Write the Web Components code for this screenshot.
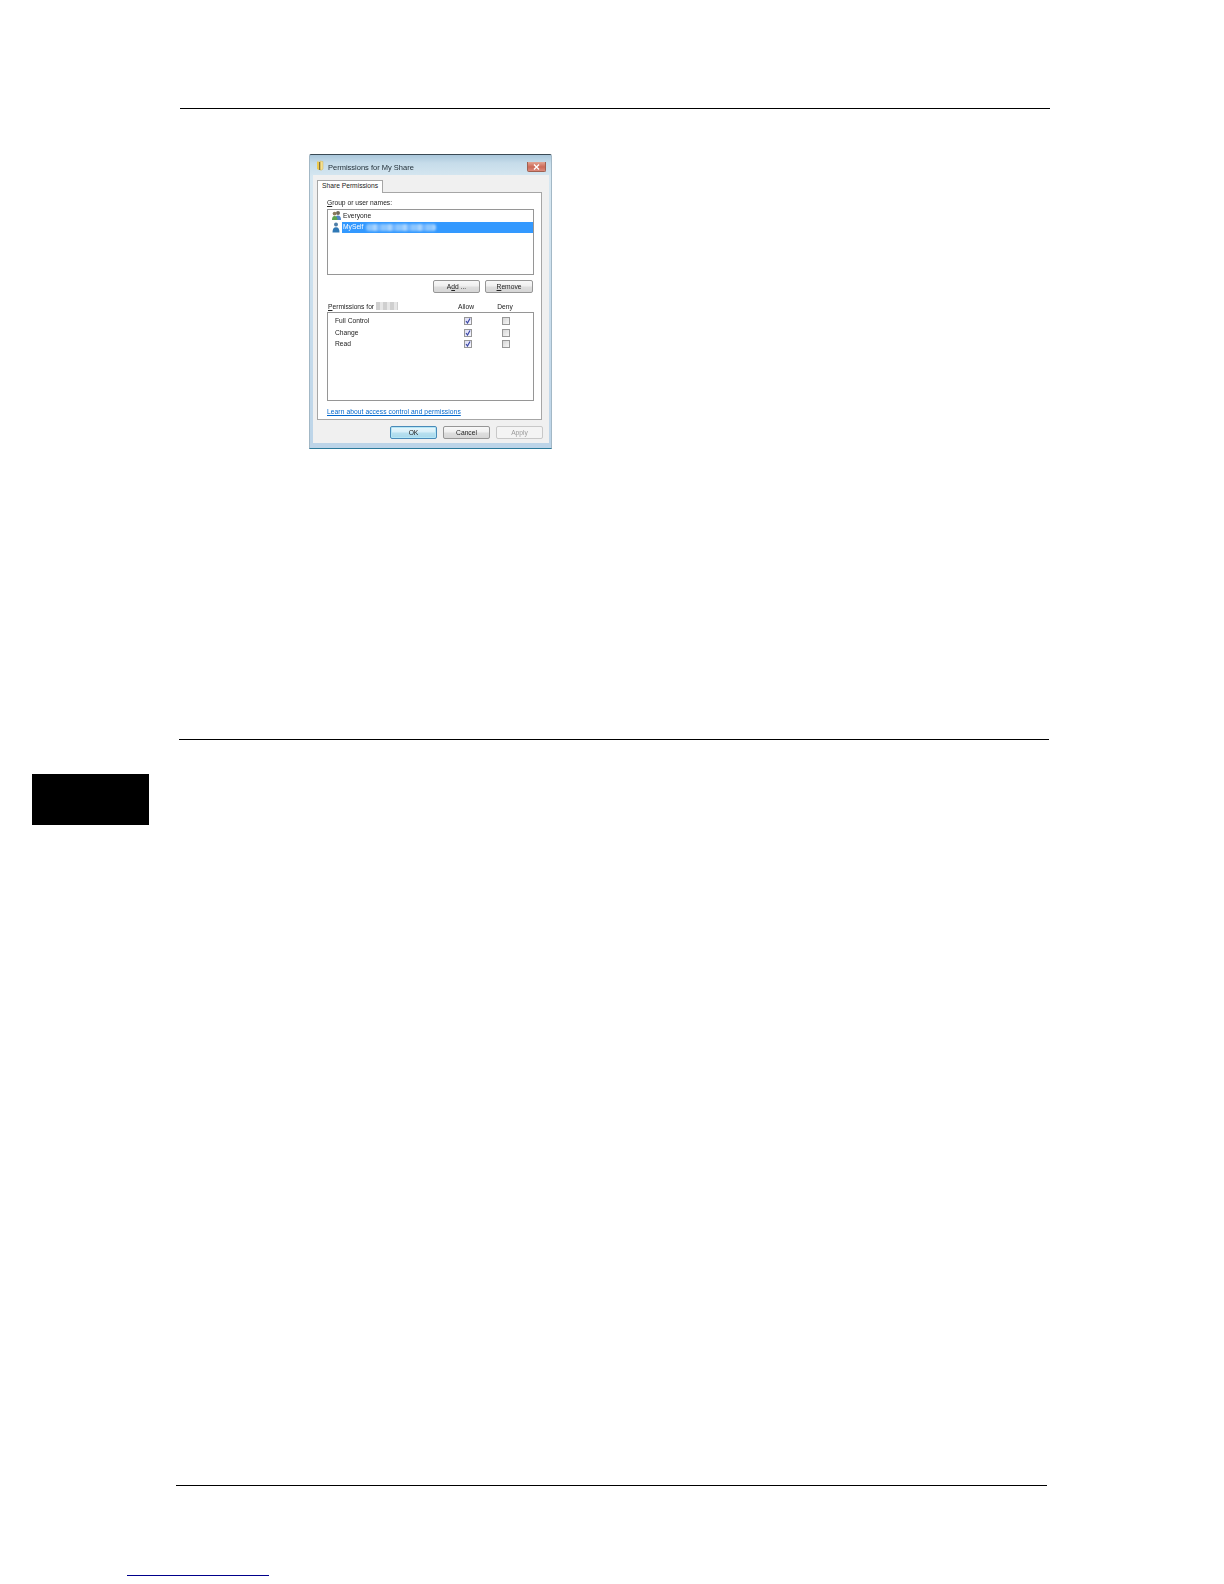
<!DOCTYPE html>
<html>
<head>
<meta charset="utf-8">
<title>Permissions for My Share</title>
<style>
    html, body { margin: 0; background: #fff; }
</style>
</head>
<body>
<doc-page>
    <win-dialog heading="Permissions for My Share"></win-dialog>
</doc-page>

<script>
const pageTemplate = document.createElement('template');
pageTemplate.innerHTML = `
    <style>
        :host { display: block; width: 1224px; height: 1584px; overflow: hidden; background: #fff; }
        .rule { height: 1px; background: #000; }
        .top { margin: 108px 0 0 180px; width: 870px; }
        .dialog { margin: 45px 0 0 309px; width: 243px; }
        .middle { margin: 290px 0 0 179px; width: 870px; }
        .chapter { margin: 34px 0 0 32px; width: 117px; height: 51px; background: #000; }
        .bottom { margin: 660px 0 0 176px; width: 871px; }
        .link { margin: 89px 0 0 127px; width: 142px; height: 1px; background: #00008b; }
    </style>
    <div class="rule top"></div>
    <div class="dialog"><slot></slot></div>
    <div class="rule middle"></div>
    <div class="chapter"></div>
    <div class="rule bottom"></div>
    <div class="link"></div>
`;

class DocPage extends HTMLElement {
    constructor() {
        super();
        this.attachShadow({mode: "open"});
        this.shadowRoot.appendChild(pageTemplate.content.cloneNode(true));
    }
}

const buttonTemplate = document.createElement('template');
buttonTemplate.innerHTML = `
    <style>
        :host {
            display: flex; align-items: center; justify-content: center;
            height: 13px; box-sizing: border-box;
            border: 1px solid #969696; border-radius: 2px;
            background: linear-gradient(#f8f8f8 0, #efefef 48%, #dedede 52%, #d6d6d6 100%);
            color: #222;
        }
        :host([primary]) {
            border-color: #4a8ab8;
            background: linear-gradient(#eaf7fc 0, #d6eef8 48%, #b8e0f0 52%, #a9d8eb 100%);
            box-shadow: inset 0 0 0 1px #b4e6f6;
        }
        :host([disabled]) {
            border-color: #c8c8c8; background: #f4f4f4; color: #9a9a9a;
        }
    </style>
    <slot></slot>
`;

class WinButton extends HTMLElement {
    constructor() {
        super();
        this.attachShadow({mode: "open"});
        this.shadowRoot.appendChild(buttonTemplate.content.cloneNode(true));
    }
}

const checkTemplate = document.createElement('template');
checkTemplate.innerHTML = `
    <style>
        :host {
            display: block; width: 8px; height: 8px; box-sizing: border-box;
            border: 1px solid #979797;
            background: linear-gradient(135deg, #d6d6d6, #f6f6f6);
        }
        :host([checked]) { background: linear-gradient(135deg, #dcdcf2, #f6f6ff); }
        svg { display: none; width: 6px; height: 6px; }
        :host([checked]) svg { display: block; }
    </style>
    <svg viewBox="0 0 6 6"><path d="M1 3 L2.5 5 L5 .5" fill="none" stroke="#3a46a4" stroke-width="1.2"/></svg>
`;

class WinCheck extends HTMLElement {
    constructor() {
        super();
        this.attachShadow({mode: "open"});
        this.shadowRoot.appendChild(checkTemplate.content.cloneNode(true));
    }
}

const permTemplate = document.createElement('template');
permTemplate.innerHTML = `
    <style>
        :host {
            display: grid; grid-template-columns: 128.5px 8px 30.5px 8px;
            align-items: center; height: 11.5px; color: #222;
        }
    </style>
    <span id="name"></span>
    <win-check checked></win-check>
    <span></span>
    <win-check></win-check>
`;

class PermRow extends HTMLElement {
    constructor() {
        super();
        this.attachShadow({mode: "open"});
        this.shadowRoot.appendChild(permTemplate.content.cloneNode(true));
        this.shadowRoot.querySelector('#name').innerText = this.getAttribute('name');
    }
}

const dialogTemplate = document.createElement('template');
dialogTemplate.innerHTML = `
    <style>
        :host {
            display: block; height: 295px; box-sizing: border-box;
            font: 6.7px/10px "Liberation Sans", sans-serif; color: #222;
            background: linear-gradient(#a9c6da 0, #c6dcea 8px, #d6e7f1 22px, #bcd4e8 100%);
            border: 1px solid #a3b8c6; border-top-color: #3a4a55; border-bottom-color: #2c7a9a; border-radius: 2px 2px 0 0;
            padding: 0 2px 5px 3px;
            filter: blur(.35px);
        }
        .title {
            display: flex; align-items: center; height: 20px; padding: 0 3px 0 3px;
        }
        .title svg { width: 8px; height: 11px; margin-right: 4px; }
        .title b { flex: 1; font-weight: normal; font-size: 7.5px; color: #1d2a33; padding-top: 5px; }
        .close {
            display: flex; align-items: center; justify-content: center;
            width: 19px; height: 10px; margin-top: 4px; box-sizing: border-box;
            border: 1px solid #a06050; border-top: 0; border-radius: 0 0 2px 2px;
            background: linear-gradient(#e3a594, #cc6a58 55%, #dc8a7c);
        }
        .close svg { width: 7px; height: 6px; margin: 0; }
        .client { height: 268px; background: #f0f0f0; padding: 5px 7px 0 4px; box-sizing: border-box; }
        .tab {
            display: inline-block; position: relative; z-index: 1; box-sizing: border-box;
            width: 66px; height: 13px; padding: 0 0 0 4px;
            background: #fff; border: 1px solid #a6a6a6; border-bottom: 0;
        }
        .panel {
            box-sizing: border-box; height: 228px; margin-top: -1px;
            padding: 5px 7px 0 9px; background: #fff; border: 1px solid #a6a6a6;
        }
        .box { border: 1px solid #969696; box-sizing: border-box; background: #fff; }
        .label { height: 11px; }
        .users { height: 66px; }
        .user { display: flex; align-items: center; height: 11.5px; padding-left: 3px; }
        .user svg { width: 11px; height: 11px; flex: none; }
        .user span { flex: 1; display: flex; align-items: center; height: 100%; padding-left: 1px; }
        .user.on span { background: #3399ff; color: #fff; }
        .smear {
            width: 70px; height: 7px; margin-left: 3px; border-radius: 3px;
            background: repeating-linear-gradient(90deg, #8cc6ff 0 7px, #a8d4ff 7px 11px, #72b6ff 11px 15px);
            filter: blur(1px);
        }
        .smear.grey { display: inline-block; width: 22px; height: 8px; margin: 0 0 -1px 2px; border-radius: 0;
            background: repeating-linear-gradient(90deg, #cfcfcf 0 4px, #e6e6e6 4px 7px); filter: blur(.6px); }
        .actions { display: flex; justify-content: flex-end; gap: 5px; margin-top: 5px; padding-right: 1px; }
        .actions win-button { width: 47px; }
        .actions win-button:last-child { width: 48px; }
        .head {
            display: grid; grid-template-columns: 128px 20px 19px 20px;
            align-items: center; height: 10px; margin-top: 9px; padding-left: 1px;
        }
        .head span { text-align: center; white-space: nowrap; }
        .head span:first-child { text-align: left; }
        .perms { height: 89px; padding: 2.5px 0 0 7px; }
        .learn { display: block; margin-top: 6px; color: #0066cc; text-decoration: underline; letter-spacing: .07px; white-space: nowrap; }
        .footer { display: flex; justify-content: flex-end; gap: 6px; margin-top: 6px; margin-right: -1px; }
        .footer win-button { width: 47px; }
        u { text-decoration: underline; }
    </style>
    <div class="title">
        <svg viewBox="0 0 8 11">
            <path d="M1 1.5 Q3 1 3.5 2.5 L3.5 10 Q1.5 10 1 8.5 Z" fill="#efc94c"/>
            <path d="M4 1 L7 1.5 L7 9 Q6 10.5 4 10 Z" fill="#f6e08e" stroke="#c9a94a" stroke-width=".4"/>
            <path d="M3.7 2 V10" stroke="#4a3f1c" stroke-width=".8"/>
        </svg>
        <b id="heading"></b>
        <div class="close">
            <svg viewBox="0 0 7 6"><path d="M1 .5 L6 5.5 M6 .5 L1 5.5" stroke="#fff" stroke-width="1.4"/></svg>
        </div>
    </div>
    <div class="client">
        <div class="tab">Share Permissions</div>
        <div class="panel">
            <div class="label"><u>G</u>roup or user names:</div>
            <div class="box users">
                <div class="user">
                    <svg viewBox="0 0 11 11">
                        <circle cx="7" cy="3" r="2" fill="#6f6a5a"/>
                        <path d="M4 10 Q4 5.5 7 5.5 Q10 5.5 10 10 Z" fill="#4f86c6"/>
                        <circle cx="3.6" cy="3.6" r="1.9" fill="#8a7a5c"/>
                        <path d="M1 10 Q1 6 3.6 6 Q6.4 6 6.4 10 Z" fill="#5ba34f"/>
                    </svg>
                    <span>Everyone</span>
                </div>
                <div class="user on">
                    <svg viewBox="0 0 11 11">
                        <circle cx="5" cy="2.6" r="2" fill="#4f7fa8"/>
                        <path d="M1.5 10.5 Q1.5 5.2 5 5.2 Q8.5 5.2 8.5 10.5 Z" fill="#2f78b5"/>
                    </svg>
                    <span>MySelf<i class="smear"></i></span>
                </div>
            </div>
            <div class="actions">
                <win-button><span>A<u>d</u>d ...</span></win-button>
                <win-button><span><u>R</u>emove</span></win-button>
            </div>
            <div class="head">
                <span><u>P</u>ermissions for<i class="smear grey"></i></span>
                <span>Allow</span><span></span><span>Deny</span>
            </div>
            <div class="box perms">
                <perm-row name="Full Control"></perm-row>
                <perm-row name="Change"></perm-row>
                <perm-row name="Read"></perm-row>
            </div>
            <a class="learn">Learn about access control and permissions</a>
        </div>
        <div class="footer">
            <win-button primary>OK</win-button>
            <win-button>Cancel</win-button>
            <win-button disabled>Apply</win-button>
        </div>
    </div>
`;

class WinDialog extends HTMLElement {
    constructor() {
        super();
        this.attachShadow({mode: "open"});
        this.shadowRoot.appendChild(dialogTemplate.content.cloneNode(true));
        this.shadowRoot.querySelector('#heading').innerText = this.getAttribute('heading');
    }
}

customElements.define('win-button', WinButton);
customElements.define('win-check', WinCheck);
customElements.define('perm-row', PermRow);
customElements.define('win-dialog', WinDialog);
customElements.define('doc-page', DocPage);
</script>
</body>
</html>
